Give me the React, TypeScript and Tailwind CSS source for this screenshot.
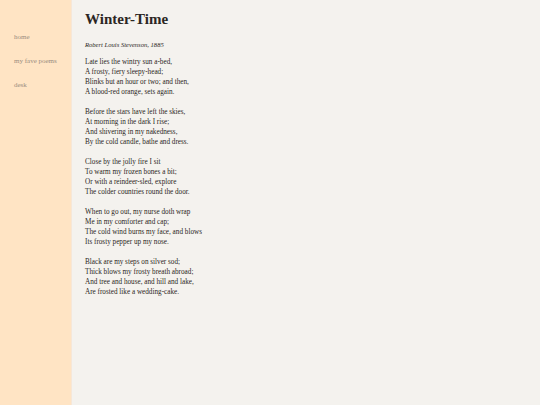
import React from 'react';

const stanzas: string[][] = [
  [
    'Late lies the wintry sun a-bed,',
    'A frosty, fiery sleepy-head;',
    'Blinks but an hour or two; and then,',
    'A blood-red orange, sets again.',
  ],
  [
    'Before the stars have left the skies,',
    'At morning in the dark I rise;',
    'And shivering in my nakedness,',
    'By the cold candle, bathe and dress.',
  ],
  [
    'Close by the jolly fire I sit',
    'To warm my frozen bones a bit;',
    'Or with a reindeer-sled, explore',
    'The colder countries round the door.',
  ],
  [
    'When to go out, my nurse doth wrap',
    'Me in my comforter and cap;',
    'The cold wind burns my face, and blows',
    'Its frosty pepper up my nose.',
  ],
  [
    'Black are my steps on silver sod;',
    'Thick blows my frosty breath abroad;',
    'And tree and house, and hill and lake,',
    'Are frosted like a wedding-cake.',
  ],
];

const links = ['home', 'my fave poems', 'desk'];

export default function App() {
  return (
    <div
      className="min-h-screen flex bg-[#f4f2ee] text-[#2b2623]"
      style={{ fontFamily: '"Liberation Serif", "DejaVu Serif", serif' }}
    >
      {/* Sidebar */}
      <nav className="w-[72px] shrink-0 bg-[#ffe4c4] border-r border-[#f6e7d8] pt-[32px] pl-[14px]">
        <ul className="flex flex-col gap-[14px]">
          {links.map((l) => (
            <li key={l} className="text-[7px] leading-[10px] text-[#9a8c80]">
              {l}
            </li>
          ))}
        </ul>
      </nav>

      {/* Poem */}
      <main className="flex-1 pl-[13px] pt-[9px]">
        <h1 className="text-[15px] leading-[20px] font-bold">Winter-Time</h1>
        <p className="mt-[11px] text-[6.6px] leading-[10px] italic">Robert Louis Stevenson, 1885</p>
        <div className="mt-[7px] flex flex-col gap-[10px]">
          {stanzas.map((s, i) => (
            <div key={i}>
              {s.map((line) => (
                <p key={line} className="text-[7.2px] leading-[10px]">
                  {line}
                </p>
              ))}
            </div>
          ))}
        </div>
      </main>
    </div>
  );
}
